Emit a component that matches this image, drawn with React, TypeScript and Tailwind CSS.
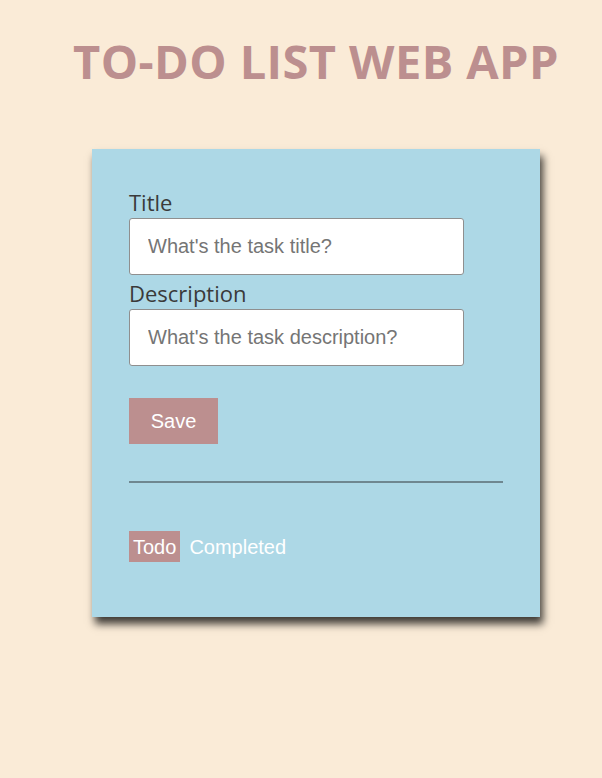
import React from "react";

export default function App() {
  return (
    <div className="min-h-[778px] w-full bg-[#FAEBD7] pl-[30px] flex flex-col items-center font-['Liberation_Sans',Arial,sans-serif]">
      <h1 className="mt-[38px] text-[47px] leading-none font-bold tracking-[0.4px] text-[#BC8F8F] whitespace-nowrap font-['Open_Sans','Noto_Sans',sans-serif]">
        TO-DO LIST WEB APP
      </h1>
      <div className="mt-[64px] w-[448px] h-[468px] bg-[#ADD8E6] shadow-[3px_7px_8px_rgba(0,0,0,0.75)] px-[37px] pt-[35px]">
        <div className="flex flex-col">
          <label className="h-[34px] pt-[2px] text-[22px] leading-[32px] text-[#3a3a3a] font-['Open_Sans','Noto_Sans',sans-serif]">
            Title
          </label>
          <input
            className="w-[335px] h-[57px] bg-white border border-[#8f8f8f] rounded-[3px] px-[18px] text-[20px] placeholder:text-[#757575] outline-none"
            placeholder="What's the task title?"
          />
          <label className="h-[34px] pt-[2px] text-[22px] leading-[32px] text-[#3a3a3a] font-['Open_Sans','Noto_Sans',sans-serif]">
            Description
          </label>
          <input
            className="w-[335px] h-[57px] bg-white border border-[#8f8f8f] rounded-[3px] px-[18px] text-[20px] placeholder:text-[#757575] outline-none"
            placeholder="What's the task description?"
          />
        </div>
        <button className="mt-[32px] w-[89px] h-[46px] bg-[#BC8F8F] text-white text-[20px] flex items-center justify-center">
          Save
        </button>
        <div className="mt-[37px] h-[2px] w-full bg-[#6f8790]" />
        <div className="mt-[48px] flex items-center gap-[9px] text-[20px] text-white">
          <span className="bg-[#BC8F8F] h-[31px] px-[4px] flex items-center">Todo</span>
          <span>Completed</span>
        </div>
      </div>
    </div>
  );
}
